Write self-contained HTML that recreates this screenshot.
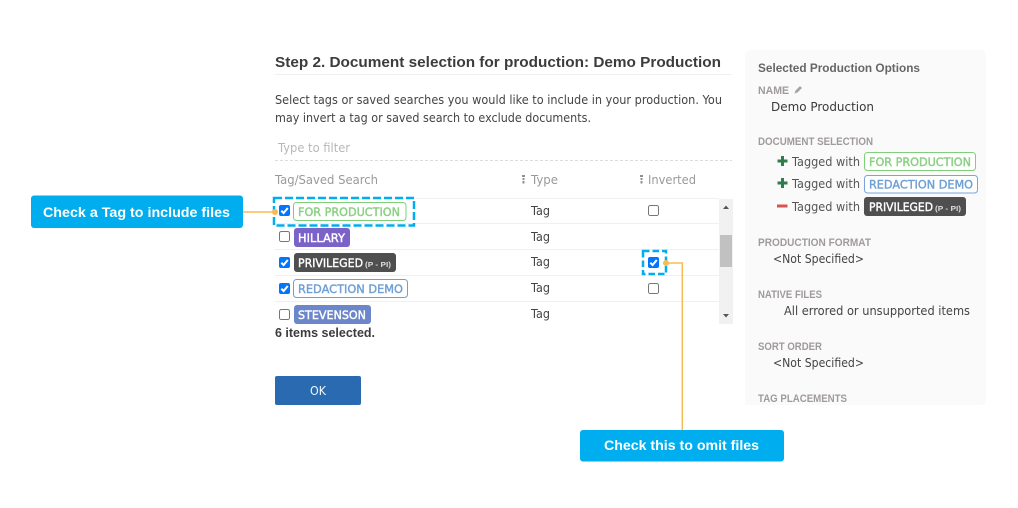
<!DOCTYPE html>
<html><head><meta charset="utf-8"><title>Document selection</title>
<style>
html,body{margin:0;padding:0;background:#fff;width:1018px;height:508px;overflow:hidden}
svg{display:block}
text{font-family:"DejaVu Sans","Liberation Sans",sans-serif;font-size:12.3px;fill:#444}
.b{font-weight:bold;font-family:"Liberation Sans",sans-serif;font-size:12.5px}
.h{font-family:"Liberation Sans",sans-serif;font-size:11px;font-weight:bold;fill:#a09a9a}
.tg{font-size:11.8px;stroke-width:.4px}
.lb{font-family:"Liberation Sans",sans-serif;font-size:14px;font-weight:bold;fill:#fff}
</style></head><body>
<svg width="1018" height="508" viewBox="0 0 1018 508" xmlns="http://www.w3.org/2000/svg">
<defs>
<clipPath id="pc"><rect x="745" y="50" width="241" height="355"/></clipPath>
<g id="cb"><rect x="0" y="0" width="11" height="11" rx="2" fill="#0075ff"/><path d="M2.300 5.700 L4.600 8 L8.800 3" fill="none" stroke="#fff" stroke-width="2.100"/></g>
<g id="ub"><rect x="0.500" y="0.500" width="10" height="10" rx="1.800" fill="#fff" stroke="#767676"/></g>
</defs>

<!-- right panel -->
<path d="M745 56a6 6 0 0 1 6-6h229a6 6 0 0 1 6 6v345a4 4 0 0 1-4 4H745z" fill="#fafafa"/>

<!-- heading -->
<text x="275" y="67" class="b" style="font-size:14.500px;fill:#3c3c3c" textLength="446" lengthAdjust="spacingAndGlyphs">Step 2. Document selection for production: Demo Production</text>
<rect x="275" y="74" width="457" height="1" fill="#f0f0f0"/>
<text x="275" y="104" textLength="447" lengthAdjust="spacingAndGlyphs">Select tags or saved searches you would like to include in your production. You</text>
<text x="275" y="122" textLength="316" lengthAdjust="spacingAndGlyphs">may invert a tag or saved search to exclude documents.</text>
<text x="278" y="152" style="fill:#b8b8b8" textLength="72" lengthAdjust="spacingAndGlyphs">Type to filter</text>
<line x1="275" y1="160.500" x2="732" y2="160.500" stroke="#dcdcdc" stroke-dasharray="3 2"/>

<!-- table header -->
<text x="275" y="184" style="fill:#9a9a9a" textLength="103" lengthAdjust="spacingAndGlyphs">Tag/Saved Search</text>
<g fill="#8f8f8f"><rect x="522" y="175" width="3" height="2"/><rect x="522.500" y="178" width="2" height="2"/><rect x="522.500" y="181" width="2" height="2.500"/>
<rect x="640" y="175" width="3" height="2"/><rect x="640.500" y="178" width="2" height="2"/><rect x="640.500" y="181" width="2" height="2.500"/></g>
<text x="531" y="184" style="fill:#9a9a9a" textLength="27" lengthAdjust="spacingAndGlyphs">Type</text>
<text x="648" y="184" style="fill:#9a9a9a" textLength="48" lengthAdjust="spacingAndGlyphs">Inverted</text>

<!-- row lines -->
<g fill="#f0f0f0">
<rect x="275" y="198" width="444" height="1"/>
<rect x="275" y="223" width="444" height="1"/>
<rect x="275" y="249" width="444" height="1"/>
<rect x="275" y="275" width="444" height="1"/>
<rect x="275" y="301" width="444" height="1"/>
</g>

<!-- checkboxes -->
<use href="#cb" x="279" y="205"/>
<use href="#ub" x="279" y="231"/>
<use href="#cb" x="279" y="257"/>
<use href="#cb" x="279" y="283"/>
<use href="#ub" x="279" y="309"/>

<!-- tags -->
<rect x="293.500" y="202.500" width="112.500" height="18" rx="3" fill="#fff" stroke="#7ed07a"/>
<text x="298" y="216" class="tg" style="fill:#88d080;stroke:#88d080" textLength="102" lengthAdjust="spacingAndGlyphs">FOR PRODUCTION</text>
<rect x="294" y="228" width="56" height="19" rx="3" fill="#7b62c9"/>
<text x="298" y="242" class="tg" style="fill:#fff;stroke:#fff" textLength="47" lengthAdjust="spacingAndGlyphs">HILLARY</text>
<rect x="294" y="253" width="102" height="19" rx="3" fill="#4f4f4f"/>
<text x="298" y="267" class="tg" style="fill:#fff;stroke:#fff" textLength="65" lengthAdjust="spacingAndGlyphs">PRIVILEGED</text>
<text x="365" y="267" class="b" style="font-size:7.500px;fill:#ddd" textLength="26" lengthAdjust="spacingAndGlyphs">(P - PI)</text>
<rect x="293.500" y="279.500" width="114" height="18" rx="3" fill="#fff" stroke="#6f9fd4"/>
<text x="298" y="293" class="tg" style="fill:#6f9fd4;stroke:#6f9fd4" textLength="105" lengthAdjust="spacingAndGlyphs">REDACTION DEMO</text>
<rect x="294" y="305" width="77" height="19" rx="3" fill="#6c87c9"/>
<text x="298" y="319" class="tg" style="fill:#fff;stroke:#fff" textLength="68" lengthAdjust="spacingAndGlyphs">STEVENSON</text>

<text x="275" y="337" class="b" style="fill:#3c3c3c" textLength="100" lengthAdjust="spacingAndGlyphs">6 items selected.</text>

<!-- type col -->
<text x="531" y="215" textLength="19" lengthAdjust="spacingAndGlyphs">Tag</text>
<text x="531" y="241" textLength="19" lengthAdjust="spacingAndGlyphs">Tag</text>
<text x="531" y="266" textLength="19" lengthAdjust="spacingAndGlyphs">Tag</text>
<text x="531" y="292" textLength="19" lengthAdjust="spacingAndGlyphs">Tag</text>
<text x="531" y="318" textLength="19" lengthAdjust="spacingAndGlyphs">Tag</text>

<!-- inverted col -->
<use href="#ub" x="648" y="205"/>
<use href="#cb" x="648" y="257"/>
<use href="#ub" x="648" y="283"/>

<!-- scrollbar -->
<rect x="719" y="199" width="14" height="125" fill="#f1f1f1"/>
<rect x="720" y="235" width="12" height="32" fill="#c1c1c1"/>
<path d="M723 209 L726 205.500 L729 209 Z" fill="#555"/>
<path d="M723 314 L726 317.500 L729 314 Z" fill="#555"/>

<!-- OK -->
<rect x="275" y="376" width="86" height="29" rx="2" fill="#2a6ab0"/>
<text x="310" y="395" style="fill:#f2f6fb" textLength="16" lengthAdjust="spacingAndGlyphs">OK</text>

<!-- right panel text -->
<g clip-path="url(#pc)">
<text x="758" y="72" class="b" style="font-size:11.500px;fill:#666" textLength="162" lengthAdjust="spacingAndGlyphs">Selected Production Options</text>
<text x="758" y="94" class="h" textLength="31" lengthAdjust="spacingAndGlyphs">NAME</text>
<path d="M794.500 93.500 L795.500 90.500 L800 86 L802 88 L797.500 92.500 Z" fill="#a5a5a5"/>
<text x="771" y="111" style="fill:#3a3a3a" textLength="103" lengthAdjust="spacingAndGlyphs">Demo Production</text>

<text x="758" y="145" class="h" textLength="115" lengthAdjust="spacingAndGlyphs">DOCUMENT SELECTION</text>
<path d="M781 156h3v3.500h3.500v3H784V166h-3v-3.500h-3.500v-3H781z" fill="#2f7d4f"/>
<path d="M781 178h3v3.500h3.500v3H784V188h-3v-3.500h-3.500v-3H781z" fill="#2f7d4f"/>
<rect x="777" y="204.500" width="10.500" height="3" fill="#d9534f"/>
<text x="792" y="166" style="fill:#555" textLength="68" lengthAdjust="spacingAndGlyphs">Tagged with</text>
<text x="792" y="188" style="fill:#555" textLength="68" lengthAdjust="spacingAndGlyphs">Tagged with</text>
<text x="792" y="211" style="fill:#555" textLength="68" lengthAdjust="spacingAndGlyphs">Tagged with</text>
<rect x="864.500" y="152.500" width="111" height="18" rx="3" fill="#fff" stroke="#7ed07a"/>
<text x="869" y="166" class="tg" style="fill:#88d080;stroke:#88d080" textLength="102" lengthAdjust="spacingAndGlyphs">FOR PRODUCTION</text>
<rect x="864.500" y="175.500" width="113" height="17.500" rx="3" fill="#fff" stroke="#7aa5d8"/>
<text x="869" y="188.500" class="tg" style="fill:#6f9fd4;stroke:#6f9fd4" textLength="104" lengthAdjust="spacingAndGlyphs">REDACTION DEMO</text>
<rect x="864" y="197" width="102" height="19" rx="3" fill="#4f4f4f"/>
<text x="869" y="211" class="tg" style="fill:#fff;stroke:#fff" textLength="64" lengthAdjust="spacingAndGlyphs">PRIVILEGED</text>
<text x="935" y="211" class="b" style="font-size:7.500px;fill:#ddd" textLength="26" lengthAdjust="spacingAndGlyphs">(P - PI)</text>

<text x="758" y="246" class="h" textLength="113" lengthAdjust="spacingAndGlyphs">PRODUCTION FORMAT</text>
<text x="773" y="263" textLength="91" lengthAdjust="spacingAndGlyphs">&lt;Not Specified&gt;</text>
<text x="758" y="298" class="h" textLength="64" lengthAdjust="spacingAndGlyphs">NATIVE FILES</text>
<text x="784" y="315" textLength="186" lengthAdjust="spacingAndGlyphs">All errored or unsupported items</text>
<text x="758" y="350" class="h" textLength="64" lengthAdjust="spacingAndGlyphs">SORT ORDER</text>
<text x="773" y="367" textLength="91" lengthAdjust="spacingAndGlyphs">&lt;Not Specified&gt;</text>
<text x="758" y="402" class="h" textLength="89" lengthAdjust="spacingAndGlyphs">TAG PLACEMENTS</text>
</g>

<!-- annotations -->
<rect x="274" y="198" width="140" height="27.500" fill="none" stroke="#00aeef" stroke-width="2.500" stroke-dasharray="8 3"/>
<rect x="643" y="251" width="23" height="23" fill="none" stroke="#00aeef" stroke-width="2.500" stroke-dasharray="6.500 3"/>
<path d="M243 212H275" fill="none" stroke="#f7bb55" stroke-width="1.500"/>
<circle cx="275" cy="212" r="3" fill="#f7bb55"/>
<path d="M666 263H682.300V431" fill="none" stroke="#f7bb55" stroke-width="1.500"/>
<circle cx="666" cy="263" r="3" fill="#f7bb55"/>

<rect x="31" y="195.500" width="212" height="32.500" rx="3" fill="#00aeef"/>
<text x="43" y="217" class="lb" textLength="187" lengthAdjust="spacingAndGlyphs">Check a Tag to include files</text>
<rect x="580" y="430" width="204" height="31.500" rx="3" fill="#00aeef"/>
<text x="604" y="450" class="lb" textLength="155" lengthAdjust="spacingAndGlyphs">Check this to omit files</text>
</svg>
</body></html>
